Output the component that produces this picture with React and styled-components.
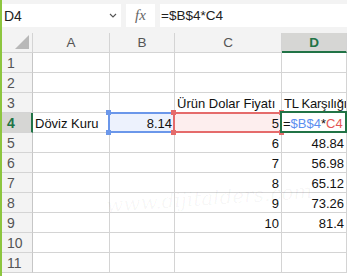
import React from 'react';
import styled, { createGlobalStyle } from 'styled-components';

const GlobalStyle = createGlobalStyle`
    body {
        margin: 0;
        overflow: hidden;
        font-family: "Liberation Sans", Arial, sans-serif;
    }
`;

const GREEN = '#217346';
const GRID = '#d4d4d4';

const ranges = {
    blue: { line: '#6b97ea', fill: '#edf2fd' },
    red: { line: '#e56b6b', fill: '#fdeeee' },
};

const Frame = styled.div`
    width: 347px;
    height: 276px;
    box-sizing: border-box;
    border-left: 2px solid #8dc63f;
    background: #fff;
    position: relative;
    overflow: hidden;
`;

const FormulaBar = styled.div`
    height: 33px;
    box-sizing: border-box;
    background: #f3f3f3;
    display: flex;
    gap: 5px;
    padding: 4px 0 6px 0;
`;

const Box = styled.div`
    background: #fff;
    display: flex;
    align-items: center;
    box-sizing: border-box;
    font-size: 14px;
    color: #222;
`;

const NameBox = styled(Box)`
    width: 119px;
    padding: 0 4px 0 2px;
    justify-content: space-between;
`;

const FxBox = styled(Box)`
    width: 29px;
    justify-content: center;
    font-family: "Liberation Serif", serif;
    font-style: italic;
    font-size: 15px;
    color: #666;
`;

const InputBox = styled(Box)`
    flex: 1;
    padding-left: 1px;
    font-size: 13.5px;
`;

const Sheet = styled.div`
    display: grid;
    grid-template-columns: 31px 77px 65px 107px 65px;
    grid-auto-rows: 20px;
`;

const Cell = styled.div`
    box-sizing: border-box;
    border-right: 1px solid ${GRID};
    border-bottom: 1px solid ${GRID};
    display: flex;
    align-items: flex-end;
    justify-content: ${({ right }) => (right ? 'flex-end' : 'flex-start')};
    padding: 0 2px 1px 2px;
    font-size: 13px;
    letter-spacing: ${({ tight }) => (tight ? '-0.25px' : '0')};
    color: #111;
    white-space: nowrap;
    overflow: ${({ range }) => (range ? 'visible' : 'hidden')};
    position: relative;
    z-index: ${({ range }) => (range ? 1 : 'auto')};
    background: ${({ range }) => (range ? ranges[range].fill : '#fff')};
`;

const ColHead = styled.div`
    box-sizing: border-box;
    border-right: 1px solid ${GRID};
    border-bottom: ${({ active }) => (active ? `2px solid ${GREEN}` : `1px solid ${GRID}`)};
    background: ${({ active }) => (active ? '#d6d6d4' : '#f3f3f3')};
    color: ${({ active }) => (active ? GREEN : '#555')};
    font-weight: ${({ active }) => (active ? 'bold' : 'normal')};
    font-size: 13.5px;
    display: flex;
    align-items: center;
    justify-content: center;
    position: relative;
`;

const RowHead = styled.div`
    box-sizing: border-box;
    border-right: ${({ active }) => (active ? `2px solid ${GREEN}` : '1px solid #c6c6c6')};
    border-bottom: 1px solid ${GRID};
    background: ${({ active }) => (active ? '#d6d6d4' : '#f3f3f3')};
    color: ${({ active }) => (active ? GREEN : '#555')};
    font-weight: ${({ active }) => (active ? 'bold' : 'normal')};
    font-size: 14px;
    display: flex;
    align-items: center;
    padding-left: 5px;
`;

const Corner = styled.div`
    position: absolute;
    right: 3px;
    bottom: 3px;
    width: 0;
    height: 0;
    border-left: 14px solid transparent;
    border-bottom: 14px solid #b8b8b8;
`;

const RangeBorder = styled.div`
    position: absolute;
    inset: -1px -1px -1px -2px;
    border: 2px solid ${({ range }) => ranges[range].line};
    pointer-events: none;
    z-index: 2;
`;

const Handle = styled.span`
    position: absolute;
    width: 5px;
    height: 5px;
    background: ${({ color }) => ranges[color].line};
    ${({ v }) => (v === 'top' ? 'top: -3px;' : 'bottom: -3px;')}
    ${({ h }) => (h === 'left' ? 'left: -4px;' : 'right: -3px;')}
    z-index: 3;
`;

const ActiveCell = styled(Cell)`
    padding: 0 0 1px 1px;
    overflow: visible;
    z-index: 4;
    background: #fff;
    &::after {
        content: '';
        position: absolute;
        inset: -2px -1px -1px -2px;
        border: 2px solid ${GREEN};
    }
`;

const Ref = styled.span`
    color: ${({ tone }) => (tone === 'blue' ? '#5b8ef0' : '#e55555')};
`;

const Watermark = styled.div`
    position: absolute;
    left: 104px;
    top: 186px;
    font-family: "DejaVu Serif", serif;
    font-style: italic;
    font-size: 20px;
    color: rgba(0, 0, 0, 0.04);
    transform: rotate(-4deg);
    pointer-events: none;
    z-index: 5;
`;

const Chevron = () => (
    <svg width="8" height="5" viewBox="0 0 8 5">
        <path d="M1 1 L4 4 L7 1" stroke="#555" strokeWidth="1.1" fill="none" />
    </svg>
);

const rows = [
    [],
    [],
    ['', '', 'Ürün Dolar Fiyatı', 'TL Karşılığı'],
    ['Döviz Kuru', '8.14', '5', null],
    ['', '', '6', '48.84'],
    ['', '', '7', '56.98'],
    ['', '', '8', '65.12'],
    ['', '', '9', '73.26'],
    ['', '', '10', '81.4'],
    [],
    [],
];

const Formula = () => (
    <>
        =<Ref tone="blue">$B$4</Ref>*<Ref tone="red">C4</Ref>
    </>
);

export default function App() {
    return (
        <Frame>
            <GlobalStyle />
            <FormulaBar>
                <NameBox>
                    <span>D4</span>
                    <Chevron />
                </NameBox>
                <FxBox>fx</FxBox>
                <InputBox>=$B$4*C4</InputBox>
            </FormulaBar>
            <Sheet>
                <ColHead><Corner /></ColHead>
                {['A', 'B', 'C', 'D'].map((c) => (
                    <ColHead key={c} active={c === 'D'}>{c}</ColHead>
                ))}
                {rows.map((r, i) => {
                    const n = i + 1;
                    const active = n === 4;
                    return (
                        <React.Fragment key={n}>
                            <RowHead active={active}>{n}</RowHead>
                            <Cell>{r[0] || ''}</Cell>
                            <Cell right range={active ? 'blue' : undefined}>
                                {r[1] || ''}
                                {active && (
                                    <>
                                        <RangeBorder range="blue" />
                                        <Handle color="blue" v="top" h="left" />
                                        <Handle color="blue" v="bottom" h="left" />
                                    </>
                                )}
                            </Cell>
                            <Cell right={n !== 3} range={active ? 'red' : undefined}>
                                {r[2] || ''}
                                {active && (
                                    <>
                                        <RangeBorder range="red" />
                                        <Handle color="red" v="top" h="left" />
                                        <Handle color="red" v="bottom" h="left" />
                                        <Handle color="red" v="top" h="right" />
                                        <Handle color="red" v="bottom" h="right" />
                                    </>
                                )}
                            </Cell>
                            {active ? (
                                <ActiveCell><Formula /></ActiveCell>
                            ) : (
                                <Cell right={n !== 3} tight={n === 3}>{r[3] || ''}</Cell>
                            )}
                        </React.Fragment>
                    );
                })}
            </Sheet>
            <Watermark>www.dijitalders.com</Watermark>
        </Frame>
    );
}
